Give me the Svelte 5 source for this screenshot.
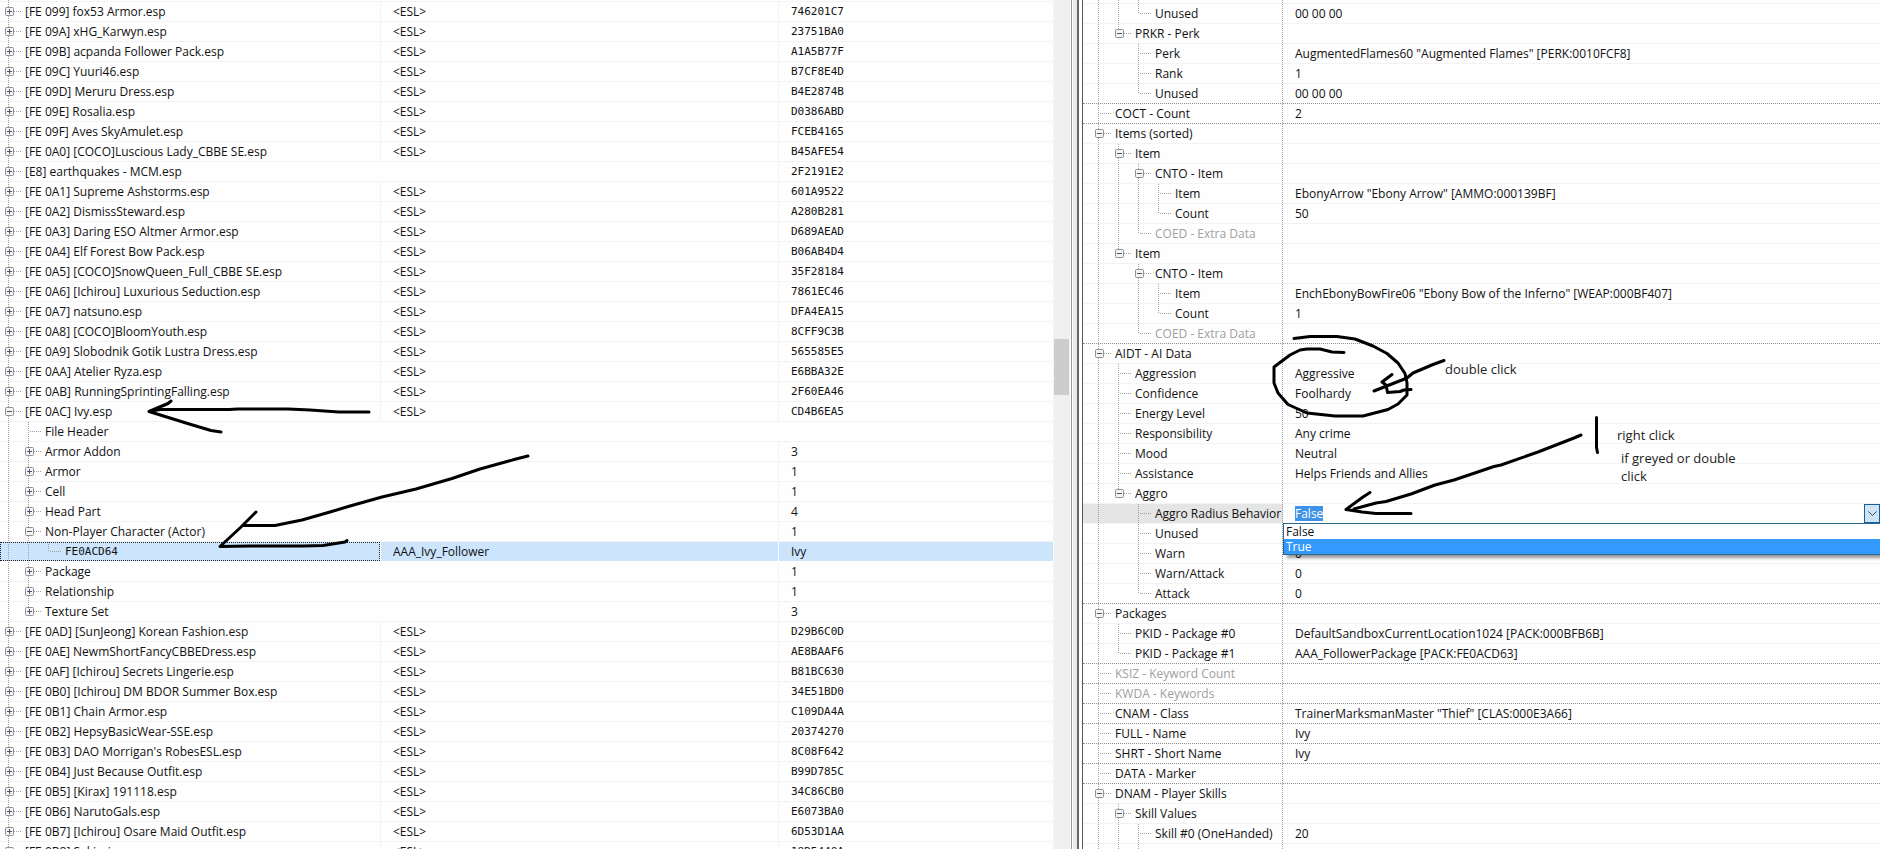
<script>
  import { onMount } from 'svelte';

  const plugins = withGuides([
    { depth: 1, name: '', kind: 'closed', cells: ['', ''] },
    plugin('[FE 099] fox53 Armor.esp', '746201C7'),
    plugin('[FE 09A] xHG_Karwyn.esp', '23751BA0'),
    plugin('[FE 09B] acpanda Follower Pack.esp', 'A1A5B77F'),
    plugin('[FE 09C] Yuuri46.esp', 'B7CF8E4D'),
    plugin('[FE 09D] Meruru Dress.esp', 'B4E2874B'),
    plugin('[FE 09E] Rosalia.esp', 'D0386ABD'),
    plugin('[FE 09F] Aves SkyAmulet.esp', 'FCEB4165'),
    plugin('[FE 0A0] [COCO]Luscious Lady_CBBE SE.esp', 'B45AFE54'),
    plugin('[E8] earthquakes - MCM.esp', '2F2191E2', ''),
    plugin('[FE 0A1] Supreme Ashstorms.esp', '601A9522'),
    plugin('[FE 0A2] DismissSteward.esp', 'A280B281'),
    plugin('[FE 0A3] Daring ESO Altmer Armor.esp', 'D689AEAD'),
    plugin('[FE 0A4] Elf Forest Bow Pack.esp', 'B06AB4D4'),
    plugin('[FE 0A5] [COCO]SnowQueen_Full_CBBE SE.esp', '35F28184'),
    plugin('[FE 0A6] [Ichirou] Luxurious Seduction.esp', '7861EC46'),
    plugin('[FE 0A7] natsuno.esp', 'DFA4EA15'),
    plugin('[FE 0A8] [COCO]BloomYouth.esp', '8CFF9C3B'),
    plugin('[FE 0A9] Slobodnik Gotik Lustra Dress.esp', '565585E5'),
    plugin('[FE 0AA] Atelier Ryza.esp', 'E6BBA32E'),
    plugin('[FE 0AB] RunningSprintingFalling.esp', '2F60EA46'),
    { ...plugin('[FE 0AC] Ivy.esp', 'CD4B6EA5'), kind: 'open' },
    { depth: 2, name: 'File Header', kind: 'leaf', cells: ['', ''] },
    group('Armor Addon', '3'),
    group('Armor', '1'),
    group('Cell', '1'),
    group('Head Part', '4'),
    { ...group('Non-Player Character (Actor)', '1'), kind: 'open' },
    { depth: 3, name: 'FE0ACD64', kind: 'leaf', cells: ['AAA_Ivy_Follower', 'Ivy'], selected: true },
    group('Package', '1'),
    group('Relationship', '1'),
    group('Texture Set', '3'),
    plugin('[FE 0AD] [SunJeong] Korean Fashion.esp', 'D29B6C0D'),
    plugin('[FE 0AE] NewmShortFancyCBBEDress.esp', 'AE8BAAF6'),
    plugin('[FE 0AF] [Ichirou] Secrets Lingerie.esp', 'B81BC630'),
    plugin('[FE 0B0] [Ichirou] DM BDOR Summer Box.esp', '34E51BD0'),
    plugin('[FE 0B1] Chain Armor.esp', 'C109DA4A'),
    plugin('[FE 0B2] HepsyBasicWear-SSE.esp', '20374270'),
    plugin("[FE 0B3] DAO Morrigan's RobesESL.esp", '8C08F642'),
    plugin('[FE 0B4] Just Because Outfit.esp', 'B99D785C'),
    plugin('[FE 0B5] [Kirax] 191118.esp', '34C86CB0'),
    plugin('[FE 0B6] NarutoGals.esp', 'E6073BA0'),
    plugin('[FE 0B7] [Ichirou] Osare Maid Outfit.esp', '6D53D1AA'),
    plugin('[FE 0B8] Sekirei.esp', '18D5440A'),
    { depth: 1, name: '', kind: 'closed', cells: ['', ''] }
  ]);

  const fields = withGuides([
    field(3, ''),
    field(3, 'Unused', '00 00 00'),
    field(2, 'PRKR - Perk', '', 'open'),
    field(3, 'Perk', 'AugmentedFlames60 "Augmented Flames" [PERK:0010FCF8]'),
    field(3, 'Rank', '1'),
    field(3, 'Unused', '00 00 00'),
    field(1, 'COCT - Count', '2'),
    field(1, 'Items (sorted)', '', 'open'),
    field(2, 'Item', '', 'open'),
    field(3, 'CNTO - Item', '', 'open'),
    field(4, 'Item', 'EbonyArrow "Ebony Arrow" [AMMO:000139BF]'),
    field(4, 'Count', '50'),
    { ...field(3, 'COED - Extra Data'), muted: true },
    field(2, 'Item', '', 'open'),
    field(3, 'CNTO - Item', '', 'open'),
    field(4, 'Item', 'EnchEbonyBowFire06 "Ebony Bow of the Inferno" [WEAP:000BF407]'),
    field(4, 'Count', '1'),
    { ...field(3, 'COED - Extra Data'), muted: true },
    field(1, 'AIDT - AI Data', '', 'open'),
    field(2, 'Aggression', 'Aggressive'),
    field(2, 'Confidence', 'Foolhardy'),
    field(2, 'Energy Level', '50'),
    field(2, 'Responsibility', 'Any crime'),
    field(2, 'Mood', 'Neutral'),
    field(2, 'Assistance', 'Helps Friends and Allies'),
    field(2, 'Aggro', '', 'open'),
    { ...field(3, 'Aggro Radius Behavior', 'False'), editing: true },
    field(3, 'Unused', ''),
    field(3, 'Warn', '0'),
    field(3, 'Warn/Attack', '0'),
    field(3, 'Attack', '0'),
    field(1, 'Packages', '', 'open'),
    field(2, 'PKID - Package #0', 'DefaultSandboxCurrentLocation1024 [PACK:000BFB6B]'),
    field(2, 'PKID - Package #1', 'AAA_FollowerPackage [PACK:FE0ACD63]'),
    { ...field(1, 'KSIZ - Keyword Count'), muted: true },
    { ...field(1, 'KWDA - Keywords'), muted: true },
    field(1, 'CNAM - Class', 'TrainerMarksmanMaster "Thief" [CLAS:000E3A66]'),
    field(1, 'FULL - Name', 'Ivy'),
    field(1, 'SHRT - Short Name', 'Ivy'),
    field(1, 'DATA - Marker'),
    field(1, 'DNAM - Player Skills', '', 'open'),
    field(2, 'Skill Values', '', 'open'),
    field(3, 'Skill #0 (OneHanded)', '20'),
    field(3, ''),
    field(3, ''),
    field(2, ''),
    field(1, '')
  ]);

  const options = ['False', 'True'];
  let behavior = $state('False');
  let hovered = $state('True');
  let editor;

  function plugin(name, hash, flag = '<ESL>') {
    return { depth: 1, name, kind: 'closed', cells: [flag, hash], mono: true };
  }

  function group(name, count) {
    return { depth: 2, name, kind: 'closed', cells: ['', count] };
  }

  function field(depth, name, value = '', kind = 'leaf') {
    return { depth, name, value, kind };
  }

  // For every level, note whether its line goes on below the row.
  function withGuides(rows) {
    return rows.map((row, i) => {
      const guides = [];
      for (let level = 1; level <= row.depth; level++) {
        const next = rows.slice(i + 1).find((r) => r.depth <= level);
        const goesOn = next?.depth === level;
        if (level < row.depth) guides.push(goesOn ? 'full' : 'none');
        else guides.push(goesOn || !next ? 'full' : 'half');
      }
      return { ...row, guides, sectionEnd: rows[i + 1]?.depth === 1 };
    });
  }

  // Empty cells are merged into the one on their left.
  function nameSpan(row) {
    if (row.cells[0]) return 1;
    return row.cells[1] ? 2 : 3;
  }

  onMount(() => {
    editor?.focus({ preventScroll: true });
    editor?.select();
  });
</script>

{#snippet treeName(row)}
  <div class="tree">
    {#each row.guides as guide, i}
      <span class="level {guide}">
        {#if i === row.depth - 1}
          <i class="branch"></i>
          {#if row.kind !== 'leaf'}
            <button class="toggle" aria-label={`${row.kind === 'open' ? 'Collapse' : 'Expand'} ${row.name}`}>
              <svg width="9" height="9" viewBox="0 0 9 9">
                <rect x="0.5" y="0.5" width="8" height="8" rx="1" fill="#f4f4f4" stroke="#919191" />
                <path d="M2 4.5H7" stroke="#4b5670" />
                {#if row.kind === 'closed'}<path d="M4.5 2V7" stroke="#4b5670" />{/if}
              </svg>
            </button>
          {/if}
        {/if}
      </span>
    {/each}
    <span class="name" class:mono={row.selected}>{row.name}</span>
  </div>
{/snippet}

<main>
  <section class="nav">
    <div class="nav-view">
      <table>
        <colgroup><col class="col-name" /><col class="col-editor" /><col /></colgroup>
        <tbody>
          {#each plugins as row}
            <tr class:selected={row.selected}>
              <td colspan={nameSpan(row)}>{@render treeName(row)}</td>
              {#if row.cells[0]}<td class="text">{row.cells[0]}</td>{/if}
              {#if row.cells[1]}<td class="text" class:mono={row.mono}>{row.cells[1]}</td>{/if}
            </tr>
          {/each}
        </tbody>
      </table>
    </div>
    <div class="scrollbar"><div class="thumb"></div></div>
    <div class="splitter"></div>
  </section>

  <section class="view">
    <table>
      <colgroup><col class="col-field" /><col /></colgroup>
      <tbody>
        {#each fields as row}
          <tr class:section-end={row.sectionEnd} class:editing={row.editing}>
            <td class:muted={row.muted}>{@render treeName(row)}</td>
            {#if row.editing}
              <td class="value">
                <div class="combo">
                  <input bind:this={editor} bind:value={behavior} aria-label={row.name} />
                  <button class="drop" aria-label="Show values">
                    <svg width="9" height="6" viewBox="0 0 9 6"><path d="M0.5 0.5L4.5 4.5L8.5 0.5" fill="none" stroke="#404a55" /></svg>
                  </button>
                  <ul role="listbox" aria-label={row.name}>
                    {#each options as option}
                      <li role="option" aria-selected={hovered === option} class:hovered={hovered === option}>{option}</li>
                    {/each}
                  </ul>
                </div>
              </td>
            {:else}
              <td class="value text">{row.value}</td>
            {/if}
          </tr>
        {/each}
      </tbody>
    </table>
  </section>

  <svg class="notes" aria-hidden="true">
    <g fill="none" stroke="#000" stroke-width="3" stroke-linecap="round" stroke-linejoin="round">
      <path d="M369 412H339L310 410L288 409H238L229 409.500H160L149 411.500M171 401L168 403.500L149 411.500L186 423L211 430.500L221 432" />
      <path d="M528 456L516 459L507 461.500L480 469L452 478.500L416 489L382 497L350 506L330 512L302 520L275 525.500H243M256 512L241 527L220 546.500L250 546H304L323 545.500L345 542L347 540.500" />
      <path d="M1294 338.500L1310 336.500H1337L1355 339L1373 346L1387 353.500L1398 363L1405 373.500L1407 383V395L1398 404L1388 409.500L1363 416H1335L1307 413L1288 404.500L1278 393L1274 383V367L1290 355L1300 350L1307 349H1320L1332 352L1344 352.500" />
      <path d="M1444 360.500L1433 364.500L1413 373L1407 378L1388 385.500L1374 391M1392 374.500L1382 382L1386 385L1387.500 392.500L1400 391.500L1404 390L1411 389.500" />
      <path d="M1581 435L1574 438L1538 452L1501 465L1494 466.500L1454 480L1435 485L1411 494L1386 501.500L1376 503L1354 509M1370 492.500L1363 497L1346 509.500L1362 512L1376 513.500H1411" />
      <path d="M1596.500 417.500V447.500L1597.500 452.500" />
    </g>
    <text x="1445" y="374">double click</text>
    <text x="1617" y="440">right click</text>
    <text x="1621" y="463">if greyed or double</text>
    <text x="1621" y="481">click</text>
  </svg>
</main>

<style>
  :global(body) {
    margin: 0;
    background: #fff;
    color: #111;
    font-family: 'Open Sans', 'Segoe UI', sans-serif;
    font-size: 12px;
  }
  main {
    position: relative;
    display: grid;
    grid-template-columns: minmax(0, 1083fr) minmax(0, 797fr);
    height: 100vh;
    overflow: hidden;
  }
  section { min-height: 0; overflow: hidden; }
  .nav { display: flex; }
  .nav-view { flex: 1; min-width: 0; overflow: hidden; }
  table { width: 100%; table-layout: fixed; border-collapse: separate; border-spacing: 0; }
  .nav table { margin-top: -18px; }
  .view table { margin-top: -16px; }
  .col-name { width: 381px; }
  .col-editor { width: 398px; }
  .col-field { width: 200px; }
  td {
    box-sizing: border-box; height: 20px; padding: 0; line-height: 19px;
    border-bottom: 1px solid #f3f3f3; background: #fefefe; white-space: nowrap;
  }
  .nav td { border-right: 1px solid #f3f3f3; }
  .text { padding-left: 12px; overflow: hidden; }
  .mono { font-family: 'DejaVu Sans Mono', Consolas, monospace; font-size: 11px; }
  .muted { color: #a0a0a0; }

  .tree { display: flex; height: 19px; padding-left: 5px; }
  .view .tree { padding-left: 12px; }
  .level { position: relative; flex: none; width: 20px; height: 20px; }
  .level::before {
    content: ''; position: absolute; left: 3px; top: 0; width: 1px; height: 20px;
    background: repeating-linear-gradient(#a0a0a0 0 1px, transparent 1px 2px);
  }
  .level.half::before { height: 10px; }
  .level.none::before { display: none; }
  .branch {
    position: absolute; left: 4px; top: 9px; width: 13px; height: 1px;
    background: repeating-linear-gradient(90deg, transparent 0 1px, #a0a0a0 1px 2px);
  }
  .toggle {
    position: absolute; left: 0; top: 5px; width: 9px; height: 9px;
    padding: 0; border: 0; background: none; line-height: 0;
  }
  .toggle svg { display: block; }

  .selected td { background: #cce4fc; border-color: #fff; }
  .selected td:first-child .tree { box-sizing: border-box; outline: 1px dotted #222; outline-offset: -1px; }

  .view td:first-child {
    border-right: 1px solid transparent;
    background: repeating-linear-gradient(#a0a0a0 0 1px, transparent 1px 2px) right / 1px 100% no-repeat border-box, #fefefe;
  }
  .view .section-end td { border-bottom: 1px dotted #909090; }
  .view .editing td:first-child { background-color: #e5e5e5; }
  .editing .value { background: #fff; }

  .scrollbar { flex: none; width: 16px; background: #f0f0f0; padding-top: 339px; box-sizing: border-box; }
  .thumb { width: 15px; height: 56px; background: #cdcdcd; }
  .splitter {
    flex: none; width: 13px;
    background: linear-gradient(90deg, #fff 0 1px, #999 1px 2px, #fff 2px 3px, #e9e9e9 3px 7px, #666 7px 9px, #fff 9px 12px, #555 12px 13px);
  }

  .combo { position: relative; display: flex; height: 19px; align-items: center; }
  .combo input {
    flex: 1; min-width: 0; height: 15px; margin: 0; padding: 0 0 0 12px; border: 0; outline: 0;
    background: none; color: inherit; font: inherit; line-height: 15px;
  }
  .combo input::selection { background: #3d93e8; color: #fff; }
  .drop {
    box-sizing: border-box; width: 16px; height: 19px; padding: 0; border: 1px solid #1f5c92;
    background: #cce4f7; display: grid; place-items: center;
  }
  .combo ul {
    position: absolute; left: 0; right: 0; top: 19px; z-index: 1; margin: 0; padding: 0; list-style: none;
    border: 1px solid #2a6a90; border-right: 0; background: #fff; box-shadow: 4px 3px 3px rgba(0, 0, 0, 0.4);
  }
  .combo li { height: 15px; line-height: 15px; padding-left: 2px; }
  .combo li.hovered { background: #3399ff; color: #fff; }

  .notes { position: absolute; left: 0; top: 0; width: 100%; height: 100%; z-index: 2; pointer-events: none; }
  .notes text { font-size: 13px; fill: #222; }
</style>
